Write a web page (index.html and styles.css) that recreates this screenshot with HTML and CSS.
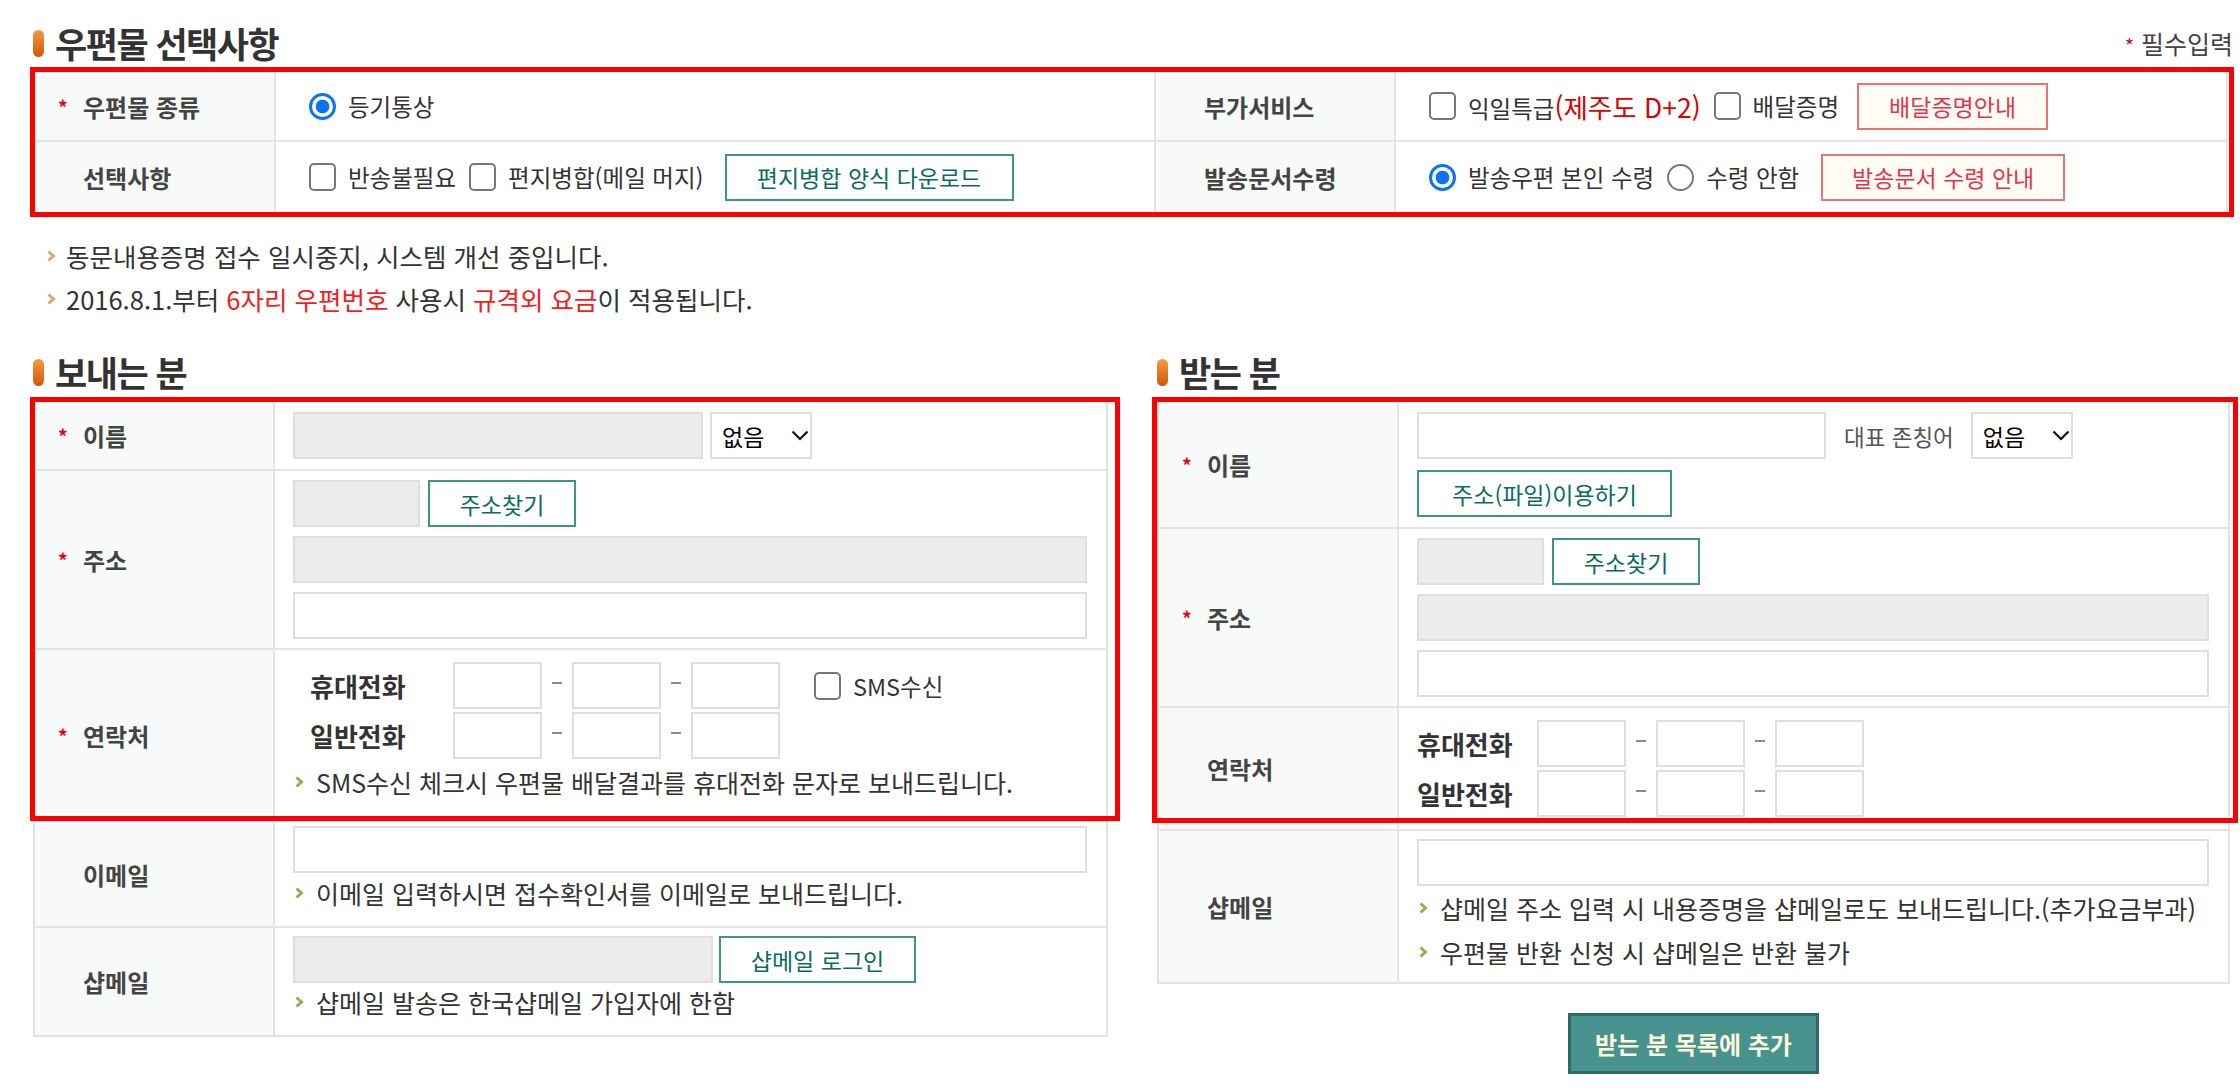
FILE: index.html
```html
<!DOCTYPE html>
<html lang="ko">
<head>
<meta charset="utf-8">
<title>우편물 선택사항</title>
<link rel="stylesheet" href="styles.css">
</head>
<body>
<div class="page">
  <div class="head">
    <h2 class="title">우편물 선택사항</h2>
    <p class="req"><span class="star">*</span> 필수입력</p>
  </div>

  <div class="hl hl-top">
    <div class="opt">
      <div class="lab r1"><span class="star">*</span>우편물 종류</div>
      <div class="val r1"><label class="ck"><input type="radio" checked><span>등기통상</span></label></div>
      <div class="lab lab2 r1">부가서비스</div>
      <div class="val r1">
        <label class="ck"><input type="checkbox"><span>익일특급<span class="red2">(제주도 D+2)</span></span></label>
        <label class="ck"><input type="checkbox"><span>배달증명</span></label>
        <button class="btn btn-r b-deliv">배달증명안내</button>
      </div>
      <div class="lab">선택사항</div>
      <div class="val">
        <label class="ck"><input type="checkbox"><span>반송불필요</span></label>
        <label class="ck"><input type="checkbox"><span>편지병합(메일 머지)</span></label>
        <button class="btn btn-g b-merge">편지병합 양식 다운로드</button>
      </div>
      <div class="lab lab2">발송문서수령</div>
      <div class="val">
        <label class="ck"><input type="radio" name="rcv" checked><span>발송우편 본인 수령</span></label>
        <label class="ck"><input type="radio" name="rcv"><span>수령 안함</span></label>
        <button class="btn btn-r b-recv">발송문서 수령 안내</button>
      </div>
    </div>
  </div>

  <ul class="notice">
    <li><svg class="arr" width="9" height="12" viewBox="0 0 9 12"><path d="M1.5 1.5 L6.5 6 L1.5 10.5" fill="none" stroke="#dca47a" stroke-width="3"/></svg>동문내용증명 접수 일시중지, 시스템 개선 중입니다.</li>
    <li><svg class="arr" width="9" height="12" viewBox="0 0 9 12"><path d="M1.5 1.5 L6.5 6 L1.5 10.5" fill="none" stroke="#dca47a" stroke-width="3"/></svg>2016.8.1.부터 <span class="red">6자리 우편번호</span> 사용시 <span class="red">규격외 요금</span>이 적용됩니다.</li>
  </ul>

  <div class="cols">
    <section class="col">
      <h2 class="title">보내는 분</h2>
      <div class="ft">
        <div class="hl hl-send">
          <div class="row">
            <div class="lab"><span class="star">*</span>이름</div>
            <div class="val flex">
              <input class="in gr w410" type="text" readonly>
              <div class="sel"><span>없음</span><svg width="18" height="11" viewBox="0 0 18 11"><path d="M1.5 1.5 L9 9 L16.5 1.5" fill="none" stroke="#111" stroke-width="2.2"/></svg></div>
            </div>
          </div>
          <div class="row">
            <div class="lab"><span class="star">*</span>주소</div>
            <div class="val stack">
              <div class="flex"><input class="in gr w127" type="text" readonly><button class="btn btn-g b-addr">주소찾기</button></div>
              <input class="in gr full" type="text" readonly>
              <input class="in full" type="text">
            </div>
          </div>
          <div class="row">
            <div class="lab"><span class="star">*</span>연락처</div>
            <div class="val phones-s">
              <div class="pl">
                <span class="pl-lab">휴대전화</span>
                <input class="in ph" type="text"><span class="dash"></span><input class="in ph" type="text"><span class="dash"></span><input class="in ph" type="text">
                <label class="ck sms"><input type="checkbox"><span>SMS수신</span></label>
              </div>
              <div class="pl">
                <span class="pl-lab">일반전화</span>
                <input class="in ph" type="text"><span class="dash"></span><input class="in ph" type="text"><span class="dash"></span><input class="in ph" type="text">
              </div>
              <p class="note n-sms"><svg class="arr" width="9" height="12" viewBox="0 0 9 12"><path d="M1.5 1.5 L6.5 6 L1.5 10.5" fill="none" stroke="#8cb24f" stroke-width="3"/></svg>SMS수신 체크시 우편물 배달결과를 휴대전화 문자로 보내드립니다.</p>
            </div>
          </div>
        </div>
        <div class="row">
          <div class="lab">이메일</div>
          <div class="val v-mail">
            <input class="in full" type="text">
            <p class="note"><svg class="arr" width="9" height="12" viewBox="0 0 9 12"><path d="M1.5 1.5 L6.5 6 L1.5 10.5" fill="none" stroke="#8cb24f" stroke-width="3"/></svg>이메일 입력하시면 접수확인서를 이메일로 보내드립니다.</p>
          </div>
        </div>
        <div class="row">
          <div class="lab">샵메일</div>
          <div class="val v-shop">
            <div class="flex"><input class="in gr w420" type="text" readonly><button class="btn btn-g b-shop">샵메일 로그인</button></div>
            <p class="note"><svg class="arr" width="9" height="12" viewBox="0 0 9 12"><path d="M1.5 1.5 L6.5 6 L1.5 10.5" fill="none" stroke="#8cb24f" stroke-width="3"/></svg>샵메일 발송은 한국샵메일 가입자에 한함</p>
          </div>
        </div>
      </div>
    </section>

    <section class="col">
      <h2 class="title">받는 분</h2>
      <div class="ft">
        <div class="hl hl-recv">
          <div class="row">
            <div class="lab"><span class="star">*</span>이름</div>
            <div class="val stack s-name">
              <div class="flex">
                <input class="in w409" type="text">
                <span class="honor">대표 존칭어</span>
                <div class="sel"><span>없음</span><svg width="18" height="11" viewBox="0 0 18 11"><path d="M1.5 1.5 L9 9 L16.5 1.5" fill="none" stroke="#111" stroke-width="2.2"/></svg></div>
              </div>
              <div><button class="btn btn-g b-file">주소(파일)이용하기</button></div>
            </div>
          </div>
          <div class="row">
            <div class="lab"><span class="star">*</span>주소</div>
            <div class="val stack">
              <div class="flex"><input class="in gr w127" type="text" readonly><button class="btn btn-g b-addr">주소찾기</button></div>
              <input class="in gr full" type="text" readonly>
              <input class="in full" type="text">
            </div>
          </div>
          <div class="row">
            <div class="lab">연락처</div>
            <div class="val phones-r">
              <div class="pl">
                <span class="pl-lab">휴대전화</span>
                <input class="in ph" type="text"><span class="dash"></span><input class="in ph" type="text"><span class="dash"></span><input class="in ph" type="text">
              </div>
              <div class="pl">
                <span class="pl-lab">일반전화</span>
                <input class="in ph" type="text"><span class="dash"></span><input class="in ph" type="text"><span class="dash"></span><input class="in ph" type="text">
              </div>
            </div>
          </div>
        </div>
        <div class="row">
          <div class="lab">샵메일</div>
          <div class="val v-rshop">
            <input class="in full" type="text">
            <p class="note tall"><svg class="arr" width="9" height="12" viewBox="0 0 9 12"><path d="M1.5 1.5 L6.5 6 L1.5 10.5" fill="none" stroke="#8cb24f" stroke-width="3"/></svg>샵메일 주소 입력 시 내용증명을 샵메일로도 보내드립니다.(추가요금부과)</p>
            <p class="note tall"><svg class="arr" width="9" height="12" viewBox="0 0 9 12"><path d="M1.5 1.5 L6.5 6 L1.5 10.5" fill="none" stroke="#8cb24f" stroke-width="3"/></svg>우편물 반환 신청 시 샵메일은 반환 불가</p>
          </div>
        </div>
      </div>
      <div class="addwrap"><button class="btn-add">받는 분 목록에 추가</button></div>
    </section>
  </div>
</div>
</body>
</html>
```

FILE: styles.css
```css
* { box-sizing: border-box; }
html, body { margin: 0; padding: 0; background: #fff; }
body {
  font-family: "Noto Sans CJK KR", "Noto Sans", sans-serif;
  color: #333;
  font-size: 23.5px;
}
.page { width: 2240px; padding: 19px 10px 0 33px; }

.head { display: flex; justify-content: space-between; align-items: center; height: 48px; }
.title {
  margin: 0;
  display: flex; align-items: center; gap: 11px;
  font-size: 35px; font-weight: 700; color: #333;
  line-height: 48px; letter-spacing: -1.5px;
}
.title::before {
  content: ""; width: 11px; height: 27px; border-radius: 6px;
  background: linear-gradient(#f29a40, #d5560b);
  flex: none;
}
.req { margin: 0 -3px 0 0; font-size: 25px; color: #444; }
.req .star { font-size: 20px; }
.star { color: #e8001c; }

/* highlight annotation */
.hl { position: relative; }
.hl::after {
  content: ""; position: absolute; pointer-events: none; z-index: 3;
  border: 5px solid #ff0000;
}
.hl-top { margin-top: 3px; margin-right: 2px; }
.hl-top::after { left: -3px; right: -6px; top: -3px; bottom: -3px; }
.hl-send::after { left: -5px; right: -14px; top: -5px; bottom: 1px; }
.hl-recv::after { left: -7px; right: -10px; top: -5px; bottom: 8px; }

/* option table */
.opt {
  display: grid;
  grid-template-columns: 241px 878px 242px 1fr;
  border: 2px solid #e2e2e2;
  border-top-color: #c6c6c6;
}
.opt > div { min-height: 70px; display: flex; align-items: center; }
.opt > .r1 { border-bottom: 2px solid #e4e4e4; }
.opt .val { padding-left: 33px; }

.lab {
  background: #f8f9f9;
  border-right: 2px solid #e4e4e4;
  padding-left: 48px;
  font-size: 24px; font-weight: 700; color: #444;
  display: flex; align-items: center;
}
.lab .star { display: inline-block; width: 25px; margin-left: -25px; font-size: 19px; font-weight: 700; }
.lab2 { border-left: 2px solid #e4e4e4; }

.ck { display: inline-flex; align-items: center; gap: 12px; margin-right: 13px; color: #333; }
input[type=checkbox], input[type=radio] {
  appearance: none; -webkit-appearance: none;
  margin: 0; width: 27px; height: 27px;
  border: 2px solid #767676; background: #fff; flex: none;
}
input[type=checkbox] { border-radius: 5px; height: 28px; }
input[type=radio] { border-radius: 50%; }
input[type=radio]:checked {
  border: 3px solid #0b74f4;
  background: radial-gradient(circle, #0b74f4 0 6.5px, #fff 7.2px);
}
.red { color: #f21d1d; }
.red2 { color: #d80000; font-size: 26.5px; }

.btn {
  font-family: inherit; font-size: 23px;
  height: 47px; padding: 0; background: #fff;
  display: inline-flex; align-items: center; justify-content: center;
}
.btn-g { border: 2px solid #3b9689; color: #0b6b62; }
.btn-r { border: 2px solid #ec7373; color: #e3354a; background: #fffcf6; }
.b-merge { width: 289px; margin-left: 8px; }
.b-deliv { width: 191px; margin-left: 5px; }
.b-recv { width: 244px; margin-left: 9px; }
.b-addr { width: 148px; margin-left: 8px; }
.b-shop { width: 197px; margin-left: 6px; }
.b-file { width: 255px; }

/* notice */
.notice { list-style: none; margin: 20px 0 0; padding: 0 0 0 14px; font-size: 25.5px; color: #333; }
.notice li { display: flex; align-items: center; line-height: 43px; white-space: pre; }
.arr { flex: none; margin-right: 10px; }

/* columns */
.cols { display: grid; grid-template-columns: 1075px 1073px; column-gap: 49px; margin-top: 28px; align-items: start; }
.col .title { margin-bottom: 4px; }

.ft {
  border: 2px solid #e2e2e2;
  border-top-color: #c6c6c6;
}
.row { display: grid; grid-template-columns: 240px 1fr; border-bottom: 2px solid #e4e4e4; }
.ft > .row:last-child { border-bottom: 0; }
.val { padding: 10px 19px 10px 18px; }
.flex { display: flex; align-items: center; }
.stack { display: flex; flex-direction: column; gap: 9px; padding-top: 9px; padding-bottom: 9px; }
.s-name { gap: 11px; padding-top: 10px; padding-bottom: 10px; }

.in {
  height: 47px; border: 2px solid #dedede; background: #fff;
  font-family: inherit; font-size: 21px; padding: 0 8px; margin: 0;
  outline: none;
}
.in.gr { background: #ececec; }
.full { width: 100%; }
.w410 { width: 410px; }
.w409 { width: 409px; }
.w127 { width: 127px; }
.w420 { width: 420px; }

.sel {
  width: 102px; height: 47px; border: 2px solid #dedede; background: #fff;
  display: flex; align-items: center; justify-content: space-between;
  padding: 0 1px 0 10px; margin-left: 7px; color: #000; font-size: 23px;
}
.honor { margin-left: 18px; color: #555; font-size: 22.5px; }
.honor + .sel { margin-left: 17px; }

/* phones */
.pl { display: flex; align-items: center; }
.pl + .pl { margin-top: 3px; }
.pl-lab { font-size: 26px; font-weight: 700; color: #333; }
.phones-s { padding-top: 12px; padding-bottom: 21px; }
.phones-s .pl-lab { width: 143px; margin-left: 17px; }
.phones-r { padding-top: 12px; padding-bottom: 12px; }
.phones-r .pl-lab { width: 120px; }
.ph { width: 89px; }
.dash { width: 30px; display: flex; justify-content: center; margin-top: -5px; }
.dash::before { content: ""; width: 10px; height: 2px; background: #8a8a8a; }
.sms { margin-left: 34px; }

.note { margin: 0; display: flex; align-items: center; line-height: 34px; font-size: 25px; color: #333; white-space: nowrap; }
.note .arr { margin-left: 2px; margin-right: 12px; }
.n-sms { margin-top: 6px; }
.v-mail { padding-top: 4px; padding-bottom: 16px; }
.v-mail .note { margin-top: 3px; }
.v-shop { padding-top: 8px; padding-bottom: 16px; }
.v-shop .note { margin-top: 2px; }
.v-rshop { padding-top: 8px; padding-bottom: 8px; }
.note.tall { line-height: 44px; }

.addwrap { display: flex; justify-content: center; margin-top: 29px; }
.btn-add {
  width: 251px; height: 61px;
  background: #48938e; border: 3px solid #2f6a65;
  color: #fdf8dc; font-family: inherit; font-size: 24px; font-weight: 700;
}
```
